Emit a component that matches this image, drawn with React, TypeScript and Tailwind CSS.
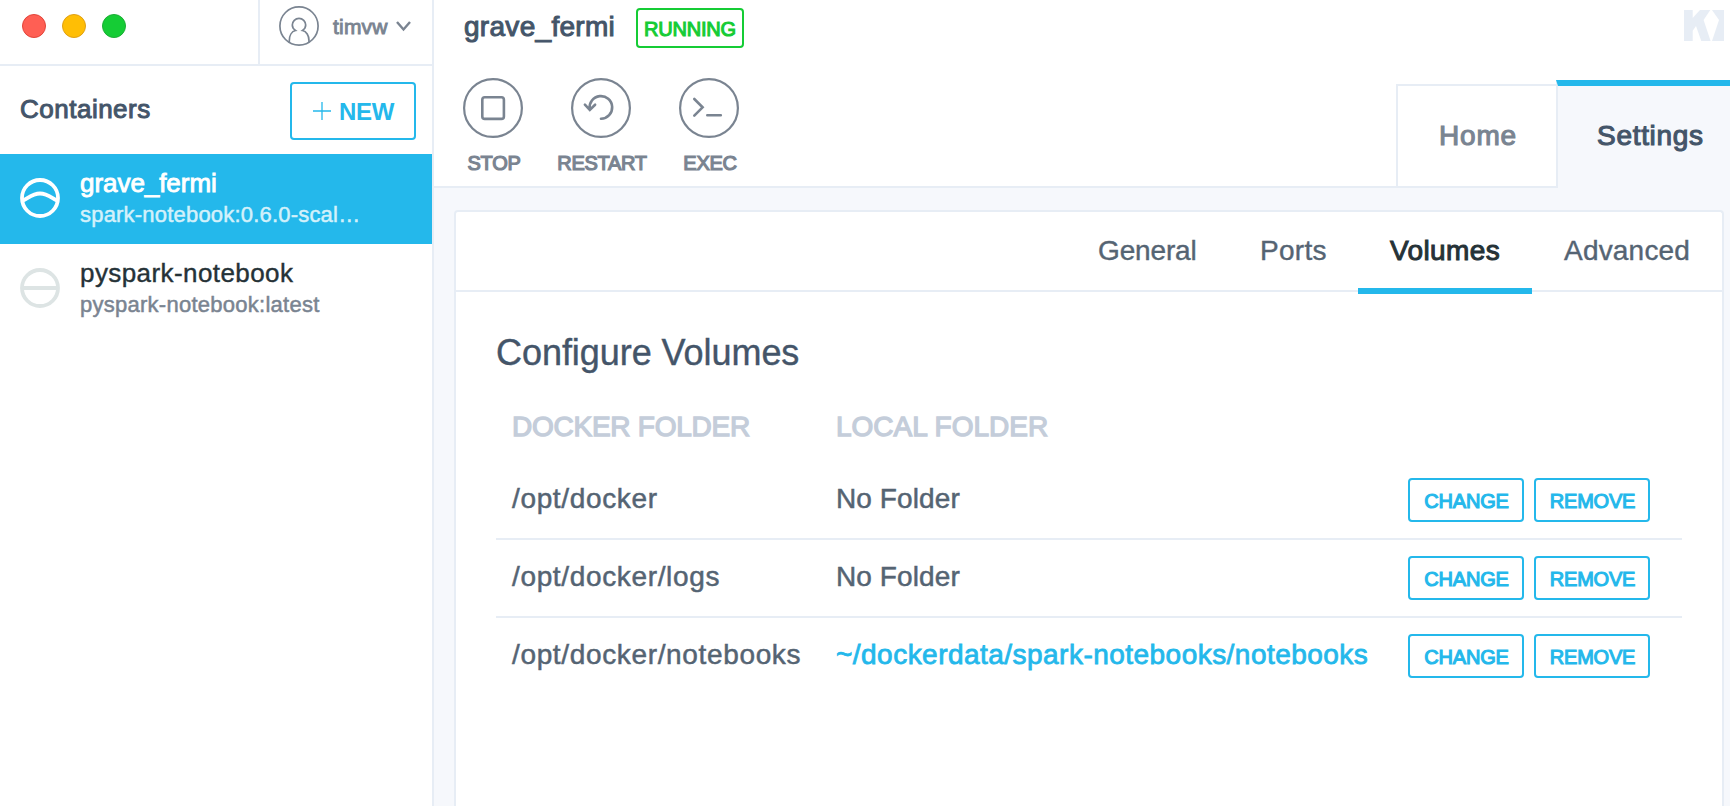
import type { ReactNode } from "react";

const volumes = [
  { docker: "/opt/docker", local: null },
  { docker: "/opt/docker/logs", local: null },
  { docker: "/opt/docker/notebooks", local: "~/dockerdata/spark-notebooks/notebooks" },
];

function Header() {
  return (
    <div className="flex h-[66px] border-b-2 border-[#e7edf5]">
      <div className="flex flex-1 gap-4 pl-[22px] pt-[14px]">
        <span className="size-6 rounded-full border-[1.5px] border-[#e2443a] bg-[#ff5f54]" />
        <span className="size-6 rounded-full border-[1.5px] border-[#e0a014] bg-[#ffbe05]" />
        <span className="size-6 rounded-full border-[1.5px] border-[#1cad35] bg-[#15cc35]" />
      </div>
      <div className="flex h-[64px] w-[174px] items-start border-l-2 border-[#e7edf5] pl-[19px] pt-[6px]">
        <div className="flex h-10 items-center">
          <svg className="size-10" viewBox="0 0 40 40" fill="none" stroke="#7a8491" strokeWidth="1.7">
            <circle cx="20" cy="20" r="19.1" />
            <path d="M10.300 36.200v-1.500c0-5 2.300-9.300 6.200-10.200-2-1.300-3.200-3.200-3.200-5.400a6.700 6.700 0 0 1 13.400 0c0 2.200-1.200 4.100-3.200 5.400 3.900.9 6.500 5.200 6.500 10.200v1.500" />
          </svg>
          <span className="ml-[14px] mt-px w-[63px] text-[21px] leading-[26px] tracking-[0.2px] text-[#7a8491] [-webkit-text-stroke:0.9px]">timvw</span>
          <svg className="h-[12px] w-[16px]" viewBox="0 0 16 12" fill="none" stroke="#7a8491" strokeWidth="2.4">
            <path d="M1 2 7.500 9.500 14 2" />
          </svg>
        </div>
      </div>
    </div>
  );
}

function Sidebar() {
  return (
    <aside className="flex w-[434px] shrink-0 flex-col border-r-2 border-[#e7edf5] bg-white">
      <Header />
      <div className="flex h-[88px] items-start justify-between pl-5 pr-4 pt-4">
        <h2 className="mt-[11px] text-[26px] leading-8 tracking-[0.5px] text-[#445569] [-webkit-text-stroke:1px]">Containers</h2>
        <button className="flex h-[58px] w-[126px] items-center rounded-[4px] border-2 border-[#24b8eb] pl-[21px] text-[#24b8eb]">
          <svg className="size-[18px]" viewBox="0 0 18 18" stroke="currentColor" strokeWidth="1.3">
            <path d="M0 9h18M9 0v18" />
          </svg>
          <span className="ml-2 mt-px text-[24px] font-bold leading-7 tracking-[-0.3px]">NEW</span>
        </button>
      </div>
      <div className="flex h-[90px] bg-[#24b8eb] pl-5">
        <svg className="mt-6 size-10" viewBox="0 0 40 40" fill="none" stroke="#fff" strokeWidth="3.800">
          <circle cx="20" cy="20" r="18" />
          <path d="M3 22.500C8 20.500 12 15.500 20 15.500S32 20.500 37 22.500" />
        </svg>
        <div className="ml-5 pt-[14px]">
          <div className="text-[26px] leading-[31px] tracking-[-0.05px] text-white [-webkit-text-stroke:0.9px]">grave_fermi</div>
          <div className="text-[22px] leading-8 tracking-[0.2px] text-[#d3f1fb] [-webkit-text-stroke:0.5px]">spark-notebook:0.6.0-scal…</div>
        </div>
      </div>
      <div className="flex h-[90px] pl-5">
        <svg className="mt-6 size-10" viewBox="0 0 40 40" fill="none" stroke="#dde4e4" strokeWidth="3.800">
          <circle cx="20" cy="20" r="18" />
          <path d="M2 20h36" />
        </svg>
        <div className="ml-5 pt-[14px]">
          <div className="text-[26px] leading-[31px] tracking-[0.42px] text-[#253237] [-webkit-text-stroke:0.4px]">pyspark-notebook</div>
          <div className="text-[22px] leading-8 tracking-[0.26px] text-[#7a8491] [-webkit-text-stroke:0.5px]">pyspark-notebook:latest</div>
        </div>
      </div>
    </aside>
  );
}

function Action({ label, children }: { label: string; children: ReactNode }) {
  return (
    <div className="flex w-[108px] flex-col items-center">
      <svg className="size-[60px]" viewBox="0 0 60 60" fill="none" stroke="#7a8491" strokeLinecap="round">
        <circle cx="30" cy="30" r="28.900" strokeWidth="2.200" />
        <g strokeWidth="2.600">{children}</g>
      </svg>
      <span className="mt-[13px] pl-[2px] text-[20px] leading-6 tracking-[-0.3px] text-[#7a8491] [-webkit-text-stroke:1.2px]">{label}</span>
    </div>
  );
}

function TopBar() {
  return (
    <header className="flex h-[188px]">
      <div className="flex flex-1 flex-col border-b-2 border-[#e7edf5] bg-white">
        <div className="flex h-[78px] pl-[30px]">
          <h1 className="mt-[9px] w-[172px] text-[28px] leading-9 tracking-[0.3px] text-[#445569] [-webkit-text-stroke:1px]">grave_fermi</h1>
          <span className="mt-2 flex h-10 w-[108px] items-center justify-center rounded-[4px] border-2 border-[#15cc35] pt-[2px] text-[20px] tracking-[-0.2px] text-[#15cc35] [-webkit-text-stroke:1.1px]">RUNNING</span>
        </div>
        <div className="flex pl-[5px]">
          <Action label="STOP">
            <rect x="19.300" y="19.300" width="21.600" height="21.600" rx="2.500" />
          </Action>
          <Action label="RESTART">
            <path d="M30 40.700a11.300 11.300 0 1 0-11.300-9.600M13.900 26.700l4.900 5.200 5.300-5.200" />
          </Action>
          <Action label="EXEC">
            <path d="M15.300 21l8.300 8.300-8.300 8.300M28.300 37.300h13.500" />
          </Action>
        </div>
      </div>
      <div className="flex w-[334px] flex-col bg-white">
        <div className="flex h-20 justify-end pr-[6px] pt-[10px]">
          <svg className="h-[31px] w-10" viewBox="0 0 40 31" fill="#e7edf5">
            <path d="M0 0h8.700v8L16 0h10.300l-6.700 10 7 21h-9.300l-5.300-15-3.300 4.700V31H0zM28 0h12v31H28l7-21z" />
          </svg>
        </div>
        <div className="flex flex-1">
          <div className="mt-1 flex w-[160px] items-center justify-center border-b-2 border-l-2 border-t-2 border-[#e7edf5] pl-[2px] text-[28px] tracking-[0.8px] text-[#7a8491] [-webkit-text-stroke:1.1px]">Home</div>
          <div className="flex flex-1 border-l-2 border-t-[6px] border-l-[#e7edf5] border-t-[#24b8eb] bg-[#f6f8fc] pl-[39px] text-[28px] text-[#445569]">
            <span className="mt-[32px] leading-9 tracking-[0.7px] [-webkit-text-stroke:1.1px]">Settings</span>
          </div>
        </div>
      </div>
    </header>
  );
}

function OutlineButton({ children }: { children: ReactNode }) {
  return (
    <button className="flex h-11 w-[116px] items-center justify-center rounded-[4px] border-2 border-[#24b8eb] pl-px pt-[2px] text-[20px] tracking-[-0.2px] text-[#24b8eb] [-webkit-text-stroke:1.1px]">
      {children}
    </button>
  );
}

function VolumesPanel() {
  return (
    <section className="ml-5 mr-[6px] mt-[22px] flex-1 rounded-t-[4px] border-2 border-b-0 border-[#e7edf5] bg-white">
      <nav className="flex h-20 justify-end border-b-2 border-[#e7edf5] text-[28px] leading-9 text-[#556473]">
        <span className="h-[82px] w-[162px] pl-8 pt-[21px] tracking-[-0.15px] [-webkit-text-stroke:0.4px]">General</span>
        <span className="h-[82px] w-[130px] pl-8 pt-[21px] tracking-[0.3px] [-webkit-text-stroke:0.4px]">Ports</span>
        <span className="h-[82px] w-[174px] border-b-[6px] border-[#24b8eb] pl-8 pt-[21px] tracking-[0.4px] text-[#253237] [-webkit-text-stroke:1px]">Volumes</span>
        <span className="h-[82px] w-[190px] pl-8 pt-[21px] tracking-[0.2px] [-webkit-text-stroke:0.4px]">Advanced</span>
      </nav>
      <div className="px-10 pt-[39px]">
        <h3 className="text-[36px] leading-[44px] tracking-[-0.05px] text-[#445569] [-webkit-text-stroke:0.4px]">Configure Volumes</h3>
        <div className="mt-[30px] flex h-[57px] pl-4 text-[28px] leading-9 text-[#c4cdda] [-webkit-text-stroke:1.3px]">
          <span className="mt-[4px] w-[324px] tracking-[-0.25px]">DOCKER FOLDER</span>
          <span className="mt-[4px]">LOCAL FOLDER</span>
        </div>
        {volumes.map((v) => (
          <div key={v.docker} className="flex h-[78px] items-start border-b-2 border-[#e7edf5] pl-4 pt-4 text-[28px] leading-9 text-[#556473] last:border-b-0">
            <span className="mt-[3px] w-[324px] tracking-[0.65px] [-webkit-text-stroke:0.5px]">{v.docker}</span>
            {v.local ? (
              <span className="mt-[3px] w-[572px] tracking-[0.47px] text-[#24b8eb] [-webkit-text-stroke:0.8px]">{v.local}</span>
            ) : (
              <span className="mt-[3px] w-[572px] tracking-[0.1px] [-webkit-text-stroke:0.5px]">No Folder</span>
            )}
            <div className="flex gap-[10px]">
              <OutlineButton>CHANGE</OutlineButton>
              <OutlineButton>REMOVE</OutlineButton>
            </div>
          </div>
        ))}
      </div>
    </section>
  );
}

export default function App() {
  return (
    <div className="flex h-screen overflow-hidden bg-[#f6f8fc] font-['Liberation_Sans',Arial,sans-serif]">
      <Sidebar />
      <main className="flex min-w-0 flex-1 flex-col">
        <TopBar />
        <VolumesPanel />
      </main>
    </div>
  );
}
